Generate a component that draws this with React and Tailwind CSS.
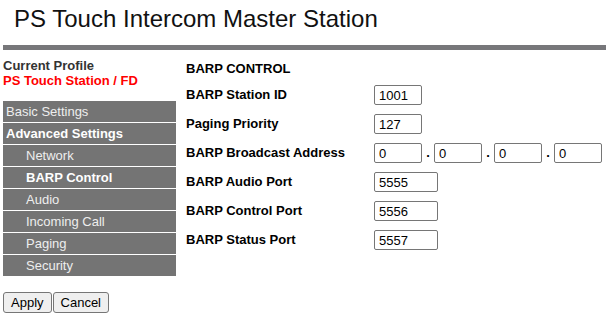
const menu = [
  { label: 'Basic Settings', sub: false },
  { label: 'Advanced Settings', sub: false, bold: true },
  { label: 'Network', sub: true },
  { label: 'BARP Control', sub: true, bold: true },
  { label: 'Audio', sub: true },
  { label: 'Incoming Call', sub: true },
  { label: 'Paging', sub: true },
  { label: 'Security', sub: true },
];

const fields = [
  { label: 'BARP Station ID', value: '1001', width: 'w-[48px]' },
  { label: 'Paging Priority', value: '127', width: 'w-[48px]' },
  { label: 'BARP Broadcast Address', ip: ['0', '0', '0', '0'] },
  { label: 'BARP Audio Port', value: '5555', width: 'w-[64px]' },
  { label: 'BARP Control Port', value: '5556', width: 'w-[64px]' },
  { label: 'BARP Status Port', value: '5557', width: 'w-[64px]' },
];

function Field({ value, width }) {
  return (
    <input
      type="text"
      defaultValue={value}
      className={`${width} h-[20px] border border-[#767676] rounded-[2px] pl-[4px] text-[13px] text-black bg-white outline-none`}
    />
  );
}

export default function App() {
  return (
    <div className="w-[606px] h-[325px] bg-white text-black font-['Liberation_Sans',Arial,sans-serif] pt-[5px]">
      <h1 className="text-[24px] leading-[28px] pl-[14px] text-[#111]">PS Touch Intercom Master Station</h1>
      <div className="mt-[12px] ml-[3px] h-[5px] bg-[#77777a]" />

      <div className="flex mt-[8px] ml-[3px]">
        <div className="w-[173px] flex flex-col">
          <div className="text-[13px] leading-[15px] font-bold text-[#333]">Current Profile</div>
          <div className="text-[13px] leading-[15px] font-bold text-[#ff0000]">PS Touch Station / FD</div>

          <div className="mt-[13px] flex flex-col gap-[1px]">
            {menu.map((m) => (
              <div
                key={m.label}
                className={`h-[21px] flex items-center bg-[#747474] text-[13px] ${m.bold ? 'font-bold text-white' : 'text-[#eeeeee]'} ${m.sub ? 'pl-[23px]' : 'pl-[3px]'}`}
              >
                {m.label}
              </div>
            ))}
          </div>

          <div className="mt-[16px] flex gap-[1px]">
            <button className="h-[21px] px-[7px] text-[13px] bg-[#efefef] border border-[#767676] rounded-[3px] text-black">Apply</button>
            <button className="h-[21px] px-[7px] text-[13px] bg-[#efefef] border border-[#767676] rounded-[3px] text-black">Cancel</button>
          </div>
        </div>

        <div className="ml-[10px] flex flex-col">
          <div className="text-[13px] leading-[15px] font-bold mt-[3px] mb-[9px]">BARP CONTROL</div>
          <div className="flex flex-col gap-[9px]">
            {fields.map((f) => (
              <div key={f.label} className="flex items-center h-[20px]">
                <div className="w-[188px] text-[13px] font-bold">{f.label}</div>
                {f.ip ? (
                  <div className="flex items-center">
                    {f.ip.map((v, i) => (
                      <div key={i} className="flex items-center">
                        {i > 0 && <span className="w-[12px] text-center text-[13px] font-bold">.</span>}
                        <Field value={v} width="w-[48px]" />
                      </div>
                    ))}
                  </div>
                ) : (
                  <Field value={f.value} width={f.width} />
                )}
              </div>
            ))}
          </div>
        </div>
      </div>
    </div>
  );
}
